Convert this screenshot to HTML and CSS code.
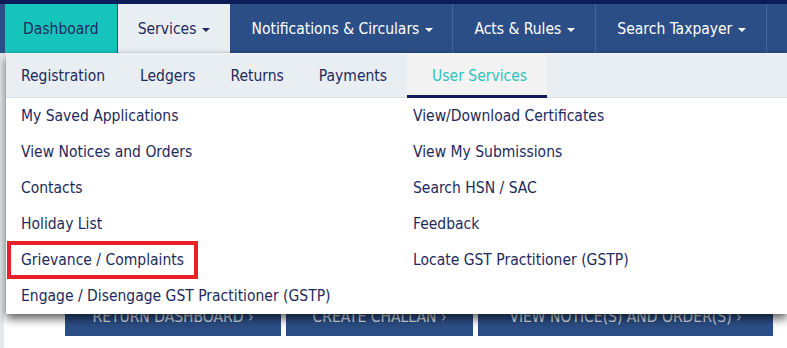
FILE: index.html
```html
<!DOCTYPE html>
<html lang="en">
<head>
  <meta charset="UTF-8" />
  <title>GST Services - User Services</title>
  <meta name="viewport" content="width=device-width, initial-scale=1" />
  <link rel="stylesheet" href="styles.css">
</head>
<body>
  <div class="topline"></div>
  <nav class="mainnav">
    <a class="dash" href="#">Dashboard</a>
    <a class="open" href="#">Services <span class="caret"></span></a>
    <a class="notif" href="#">Notifications &amp; Circulars <span class="caret"></span></a>
    <a href="#">Acts &amp; Rules <span class="caret"></span></a>
    <a href="#">Search Taxpayer <span class="caret"></span></a>
    <a class="more" href="#"></a>
  </nav>

  <div class="page">
    <div class="dropdown">
      <ul class="subtabs">
        <li><a href="#">Registration</a></li>
        <li><a href="#">Ledgers</a></li>
        <li><a href="#">Returns</a></li>
        <li><a href="#">Payments</a></li>
        <li class="active"><a href="#">User Services</a></li>
      </ul>
      <div class="menu">
        <ul>
          <li><a href="#">My Saved Applications</a></li>
          <li><a href="#">View Notices and Orders</a></li>
          <li><a href="#">Contacts</a></li>
          <li><a href="#">Holiday List</a></li>
          <li class="highlight"><a href="#">Grievance / Complaints</a></li>
          <li><a href="#">Engage / Disengage GST Practitioner (GSTP)</a></li>
        </ul>
        <ul>
          <li><a href="#">View/Download Certificates</a></li>
          <li><a href="#">View My Submissions</a></li>
          <li><a href="#">Search HSN / SAC</a></li>
          <li><a href="#">Feedback</a></li>
          <li><a href="#">Locate GST Practitioner (GSTP)</a></li>
        </ul>
      </div>
    </div>

    <div class="actions">
      <button type="button" class="btn-return">Return Dashboard &rsaquo;</button>
      <button type="button" class="btn-challan">Create Challan &rsaquo;</button>
      <button type="button" class="btn-notice">View Notice(s) and Order(s) &rsaquo;</button>
    </div>
  </div>
</body>
</html>
```

FILE: styles.css
```css
body {
  margin: 0;
  font-family: "DejaVu Sans Condensed", "DejaVu Sans", Verdana, sans-serif;
  font-stretch: condensed;
  font-size: 15.5px;
  color: #1d2a5d;
  background-color: #fff;
  overflow: hidden;
}
a {
  text-decoration: none;
  color: inherit;
}
.topline {
  height: 4px;
  background-color: #0b1c56;
}
.mainnav {
  display: flex;
  height: 49px;
  padding-left: 5px;
  background-color: #2c4e86;
}
.mainnav a {
  display: flex;
  align-items: center;
  padding: 0 20px 0 21px;
  color: #fff;
  border-right: 1px solid #45659a;
  white-space: nowrap;
}
.mainnav a.dash {
  background-color: #17c4bb;
  color: #1d2a5d;
  padding: 0 18px;
  border-right: none;
}
.mainnav a.open {
  background-color: #e9eef2;
  color: #1d2a5d;
  padding: 0 20px;
  border: 1px solid #2c4e86;
  border-top: none;
  border-bottom: none;
}
.mainnav a.notif {
  padding: 0 19px 0 20px;
}
.mainnav a.more {
  flex: 1;
  border-right: none;
}
.caret {
  display: inline-block;
  margin-left: 6px;
  margin-top: 2px;
  border-left: 4px solid transparent;
  border-right: 4px solid transparent;
  border-top: 4px solid currentColor;
}
.page {
  position: relative;
  height: 295px;
  border-left: 4px solid #e6e9ec;
}
.dropdown {
  position: absolute;
  top: 0;
  left: 2px;
  right: 0;
  z-index: 2;
  background-color: #fff;
  box-shadow: 0 5px 9px rgba(0, 0, 0, 0.6), -1px 0 2px rgba(0, 0, 0, 0.15);
}
.subtabs {
  display: flex;
  list-style: none;
  margin: 0;
  padding: 0 0 0 15px;
  height: 43px;
  background-color: #e9eef2;
  border-top: 1px solid #f2f4f6;
  border-bottom: 1px solid #dfe3e7;
}
.subtabs li {
  display: flex;
  align-items: center;
  margin-right: 35px;
}
.subtabs li:nth-child(4) {
  margin-right: 20px;
}
.subtabs li.active {
  padding: 3px 20px 0 25px;
  background-color: #f3f3f3;
  border-bottom: 3px solid #0e1b56;
  margin-bottom: -1px;
}
.subtabs li.active a {
  color: #2ec2bc;
}
.menu {
  display: grid;
  grid-template-columns: 392px 1fr;
}
.menu ul {
  list-style: none;
  margin: 0;
  padding: 0 0 0 15px;
}
.menu li {
  height: 36px;
  line-height: 36px;
  white-space: nowrap;
}
.menu li.highlight a {
  display: inline-block;
  height: 30px;
  line-height: 30px;
  margin: 3px 0 0 -10px;
  padding: 0 10px;
  outline: 4px solid #e8202a;
}
.actions {
  display: flex;
  gap: 5px;
  padding: 250px 0 0 61px;
}
.actions button {
  height: 33px;
  padding: 0 0 5px;
  border: none;
  border-radius: 0;
  background-color: #2c4e86;
  color: #dfe4ee;
  font-family: inherit;
  font-stretch: condensed;
  font-size: 15.5px;
  text-transform: uppercase;
  text-align: center;
  white-space: nowrap;
}
.actions .btn-return {
  width: 216px;
}
.actions .btn-challan {
  width: 187px;
}
.actions .btn-notice {
  width: 295px;
}
```
